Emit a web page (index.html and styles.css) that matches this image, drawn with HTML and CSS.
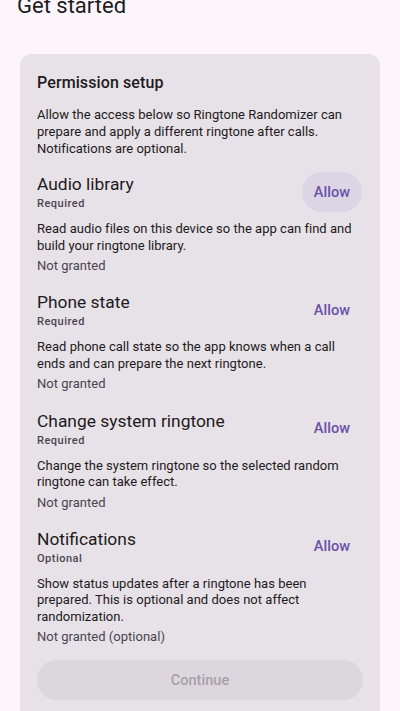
FILE: index.html
```html
<!DOCTYPE html>
<html>
<head>
<meta charset="utf-8">
<link rel="stylesheet" href="styles.css">
</head>
<body>
<div class="screen">
  <h1 class="page-title">Get started</h1>
  <section class="card">
    <h2 class="card-title">Permission setup</h2>
    <p class="intro">Allow the access below so Ringtone Randomizer can prepare and apply a different ringtone after calls. Notifications are optional.</p>

    <div class="perm">
      <div class="perm-head">
        <div class="perm-titles">
          <div class="perm-name">Audio library</div>
          <div class="perm-tag">Required</div>
        </div>
        <button class="allow pressed">Allow</button>
      </div>
      <p class="perm-desc">Read audio files on this device so the app can find and build your ringtone library.</p>
      <div class="perm-status">Not granted</div>
    </div>

    <div class="perm">
      <div class="perm-head">
        <div class="perm-titles">
          <div class="perm-name">Phone state</div>
          <div class="perm-tag">Required</div>
        </div>
        <button class="allow">Allow</button>
      </div>
      <p class="perm-desc">Read phone call state so the app knows when a call ends and can prepare the next ringtone.</p>
      <div class="perm-status">Not granted</div>
    </div>

    <div class="perm">
      <div class="perm-head">
        <div class="perm-titles">
          <div class="perm-name">Change system ringtone</div>
          <div class="perm-tag">Required</div>
        </div>
        <button class="allow">Allow</button>
      </div>
      <p class="perm-desc">Change the system ringtone so the selected random ringtone can take effect.</p>
      <div class="perm-status">Not granted</div>
    </div>

    <div class="perm">
      <div class="perm-head">
        <div class="perm-titles">
          <div class="perm-name">Notifications</div>
          <div class="perm-tag">Optional</div>
        </div>
        <button class="allow">Allow</button>
      </div>
      <p class="perm-desc">Show status updates after a ringtone has been prepared. This is optional and does not affect randomization.</p>
      <div class="perm-status">Not granted (optional)</div>
    </div>

    <button class="continue" disabled>Continue</button>
  </section>
</div>
</body>
</html>
```

FILE: styles.css
```css
html, body {
  margin: 0;
  padding: 0;
  background: #fcf6fc;
}
body {
  font-family: Roboto, "Noto Sans", sans-serif;
  color: #1d1b20;
  width: 400px;
  height: 711px;
  overflow: hidden;
}
.screen {
  padding: 0 20px;
  margin-top: -8.5px;
}
.page-title {
  margin: 0 0 0 -3px;
  font-size: 22px;
  font-weight: 400;
  line-height: 28px;
  color: #1d1b20;
}
.card {
  margin-top: 34.5px;
  background: #e7e1e8;
  border-radius: 12px;
  padding: 17.5px 17px 24px;
}
.card-title {
  margin: 0;
  font-size: 16px;
  font-weight: 500;
  line-height: 22px;
  letter-spacing: 0.1px;
}
.intro {
  margin: 12px 0 0;
  font-size: 13px;
  line-height: 17px;
  letter-spacing: 0.02px;
  color: #1d1b20;
}
.perm {
  margin-top: 15.5px;
}
.perm + .perm {
  margin-top: 15.3px;
}
.perm-head {
  display: flex;
  align-items: center;
  justify-content: space-between;
}
.perm-name {
  font-size: 17.4px;
  line-height: 24px;
  font-weight: 400;
}
.perm-tag {
  font-size: 11px;
  line-height: 16px;
  font-weight: 500;
  letter-spacing: 0.5px;
  color: #4a4650;
}
.allow {
  border: 0;
  background: transparent;
  font-family: inherit;
  font-size: 14.5px;
  font-weight: 500;
  letter-spacing: 0.05px;
  color: #6852a8;
  height: 40px;
  padding: 0 12px;
  margin-right: 1px;
  border-radius: 20px;
}
.allow.pressed {
  background: #dcd5e5;
}
.perm-desc {
  margin: 9px 0 0;
  font-size: 13px;
  line-height: 16.5px;
  letter-spacing: 0.02px;
}
.perm-status {
  margin-top: 3px;
  font-size: 13px;
  line-height: 18px;
  letter-spacing: 0.02px;
  color: #49454f;
}
.continue {
  display: block;
  width: 100%;
  height: 40px;
  margin-top: 14px;
  border: 0;
  border-radius: 20px;
  background: #dcd6dd;
  color: #a6a1a8;
  font-family: inherit;
  font-size: 14.5px;
  font-weight: 500;
  letter-spacing: 0.05px;
}
```
